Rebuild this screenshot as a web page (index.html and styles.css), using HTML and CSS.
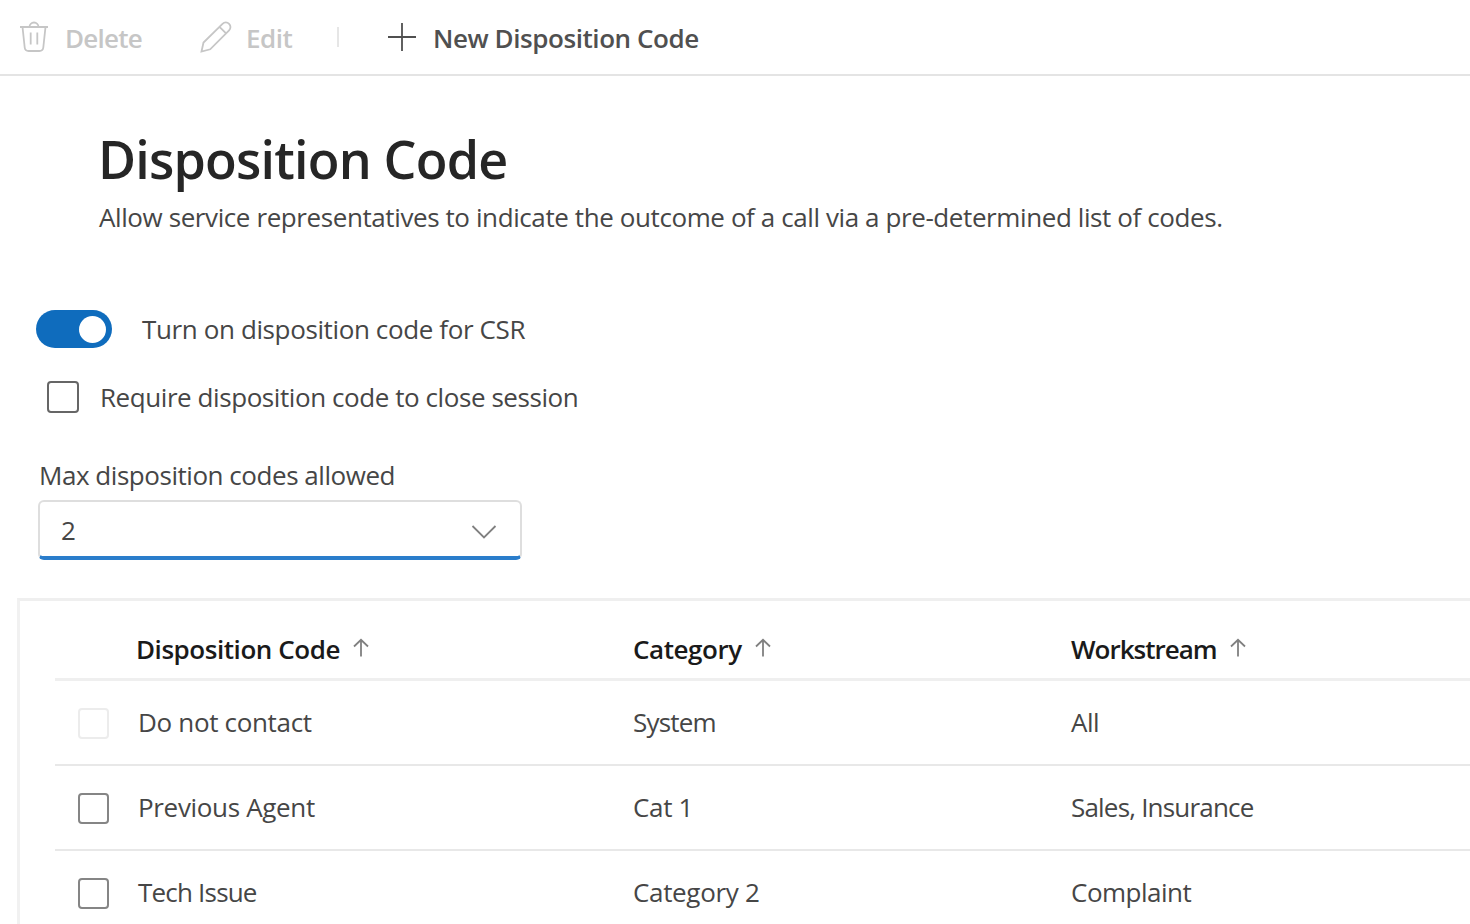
FILE: index.html
```html
<!DOCTYPE html>
<html lang="en">
<head>
<meta charset="utf-8">
<title>Disposition Code</title>
<link rel="stylesheet" href="styles.css">
</head>
<body>
<header class="toolbar">
  <button class="command command-delete" disabled>
    <svg class="icon" width="30" height="34" viewBox="0 0 30 34"><path d="M1 7h28M10.500 7a4.500 4.500 0 0 1 9 0M3.500 7l2.200 20.500a4 4 0 0 0 4 3.500h10.600a4 4 0 0 0 4-3.500L26.500 7M11.700 12.500v12M18.300 12.500v12"/></svg>
    <span class="t-delete">Delete</span>
  </button>
  <button class="command command-edit" disabled>
    <svg class="icon" width="32" height="32" viewBox="0 0 32 32"><path d="M1.500 30.500l2-9L22.500 2.800a4.600 4.600 0 0 1 6.600 6.600L10.200 28.300zM19.500 5.800l6.600 6.600"/></svg>
    <span>Edit</span>
  </button>
  <span class="divider"></span>
  <button class="command command-new">
    <svg class="icon" width="30" height="30" viewBox="0 0 30 30"><path d="M15 1v28M1 15h28"/></svg>
    <span class="t-new">New Disposition Code</span>
  </button>
</header>
<main>
  <section class="intro">
    <h1>Disposition Code</h1>
    <p>Allow service representatives to indicate the outcome of a call via a pre-determined list of codes.</p>
  </section>
  <section class="settings">
    <div class="toggle-row"><span class="toggle"><span class="knob"></span></span><span class="t-turn">Turn on disposition code for CSR</span></div>
    <div class="require-row"><span class="checkbox dark"></span><span class="t-require">Require disposition code to close session</span></div>
    <div class="field-label">Max disposition codes allowed</div>
    <div class="select"><span>2</span>
      <svg class="chevron" width="26" height="16" viewBox="0 0 26 16"><path d="M1.500 2L13 13.500 24.500 2"/></svg>
    </div>
  </section>
  <section class="panel">
    <div class="row head">
      <span></span>
      <span class="cell"><span>Disposition Code</span><svg class="arrow" width="18" height="20" viewBox="0 0 18 20"><path d="M9 18.500V2M2 8.500L9 1.800 16 8.500"/></svg></span>
      <span class="cell"><span>Category</span><svg class="arrow" width="18" height="20" viewBox="0 0 18 20"><path d="M9 18.500V2M2 8.500L9 1.800 16 8.500"/></svg></span>
      <span class="cell"><span class="t-work">Workstream</span><svg class="arrow" width="18" height="20" viewBox="0 0 18 20"><path d="M9 18.500V2M2 8.500L9 1.800 16 8.500"/></svg></span>
    </div>
    <div class="row">
      <span class="checkbox disabled"></span>
      <span class="cell name loose">Do not contact</span>
      <span class="cell tight">System</span>
      <span class="cell">All</span>
    </div>
    <div class="row">
      <span class="checkbox"></span>
      <span class="cell name loose">Previous Agent</span>
      <span class="cell loose">Cat 1</span>
      <span class="cell tight">Sales, Insurance</span>
    </div>
    <div class="row">
      <span class="checkbox"></span>
      <span class="cell name tight">Tech Issue</span>
      <span class="cell loose">Category 2</span>
      <span class="cell">Complaint</span>
    </div>
  </section>
</main>
</body>
</html>
```
FILE: styles.css
```css
* { box-sizing: border-box; }
body {
  margin: 0;
  height: 924px;
  overflow: hidden;
  background: #fff;
  color: #464646;
  font: 26px/34px "Open Sans", "Noto Sans", sans-serif;
  letter-spacing: -0.5px;
  white-space: nowrap;
}
h1, p { margin: 0; }
svg { flex: none; fill: none; stroke: currentColor; }
.toolbar {
  display: flex;
  align-items: center;
  height: 76px;
  padding: 2px 0 0 19px;
  border-bottom: 2px solid #e4e4e4;
}
.command {
  display: flex;
  align-items: center;
  padding: 0;
  border: 0;
  background: none;
  font: inherit;
  font-weight: 600;
  letter-spacing: inherit;
  color: #505050;
}
.command:disabled { color: #c6c6c6; }
.icon { stroke-width: 1.8; margin-bottom: 3px; }
.command-delete { width: 181px; gap: 16px; }
.command-edit { width: 137px; gap: 14px; }
.divider { width: 2px; height: 20px; margin-bottom: 3px; background: #e6e6e6; }
.command-new { margin-left: 48px; gap: 16px; }
.t-delete { letter-spacing: -0.75px; }
.t-new { letter-spacing: -0.43px; }
.intro { padding: 53px 0 0 98px; }
h1 { font-size: 52px; line-height: 60px; font-weight: 600; letter-spacing: -0.8px; color: #262626; }
.intro p { margin-top: 11px; padding-left: 1px; letter-spacing: -0.405px; }
.settings { padding: 76px 0 0 36px; }
.toggle-row { display: flex; align-items: center; gap: 30px; height: 38px; }
.t-turn { letter-spacing: -0.38px; }
.t-require { letter-spacing: -0.43px; }
.toggle {
  display: flex;
  align-items: center;
  justify-content: flex-end;
  width: 76px;
  height: 38px;
  padding-right: 6px;
  border-radius: 19px;
  background: #0f6cbd;
}
.knob { width: 27px; height: 27px; border-radius: 50%; background: #fff; }
.require-row { display: flex; align-items: center; gap: 21px; margin-top: 32px; padding-left: 11px; height: 34px; }
.checkbox { width: 31px; height: 31px; border: 2px solid #858585; border-radius: 4px; }
.checkbox.dark { width: 32px; height: 32px; border-color: #666; }
.checkbox.disabled { border-color: #ececec; }
.field-label { margin-top: 44px; padding-left: 3px; letter-spacing: -0.46px; }
.select {
  display: flex;
  align-items: center;
  justify-content: space-between;
  width: 484px;
  height: 60px;
  margin: 8px 0 0 2px;
  padding: 2px 23px 0 21px;
  border: 2px solid #dedede;
  border-bottom: 4px solid #2a7dcb;
  border-radius: 6px;
}
.chevron { stroke: #808080; stroke-width: 1.8; margin-top: 3px; }
.panel {
  height: 330px;
  margin: 38px 0 0 17px;
  padding-left: 35px;
  border-top: 3px solid #efefef;
  border-left: 3px solid #f1f1f1;
}
.row {
  display: grid;
  grid-template-columns: 82px 496px 438px 1fr;
  align-items: center;
  height: 85px;
  border-bottom: 2px solid #e8e8e8;
}
.row .checkbox { margin: 1px 0 0 23px; }
.cell { display: flex; align-items: center; margin-bottom: 2px; }
.head { height: 80px; padding-top: 19px; border-bottom: 3px solid #efefef; color: #1a1a1a; font-weight: 600; letter-spacing: -0.45px; }
.head .cell { margin-bottom: 0; }
.head .cell:nth-child(2) { margin-left: -1px; }
.name { padding-left: 1px; }
.loose { letter-spacing: -0.33px; }
.tight { letter-spacing: -0.8px; }
.t-work { letter-spacing: -1px; }
.arrow { margin: 0 0 3px 12px; stroke: #808080; stroke-width: 1.8; }
```
